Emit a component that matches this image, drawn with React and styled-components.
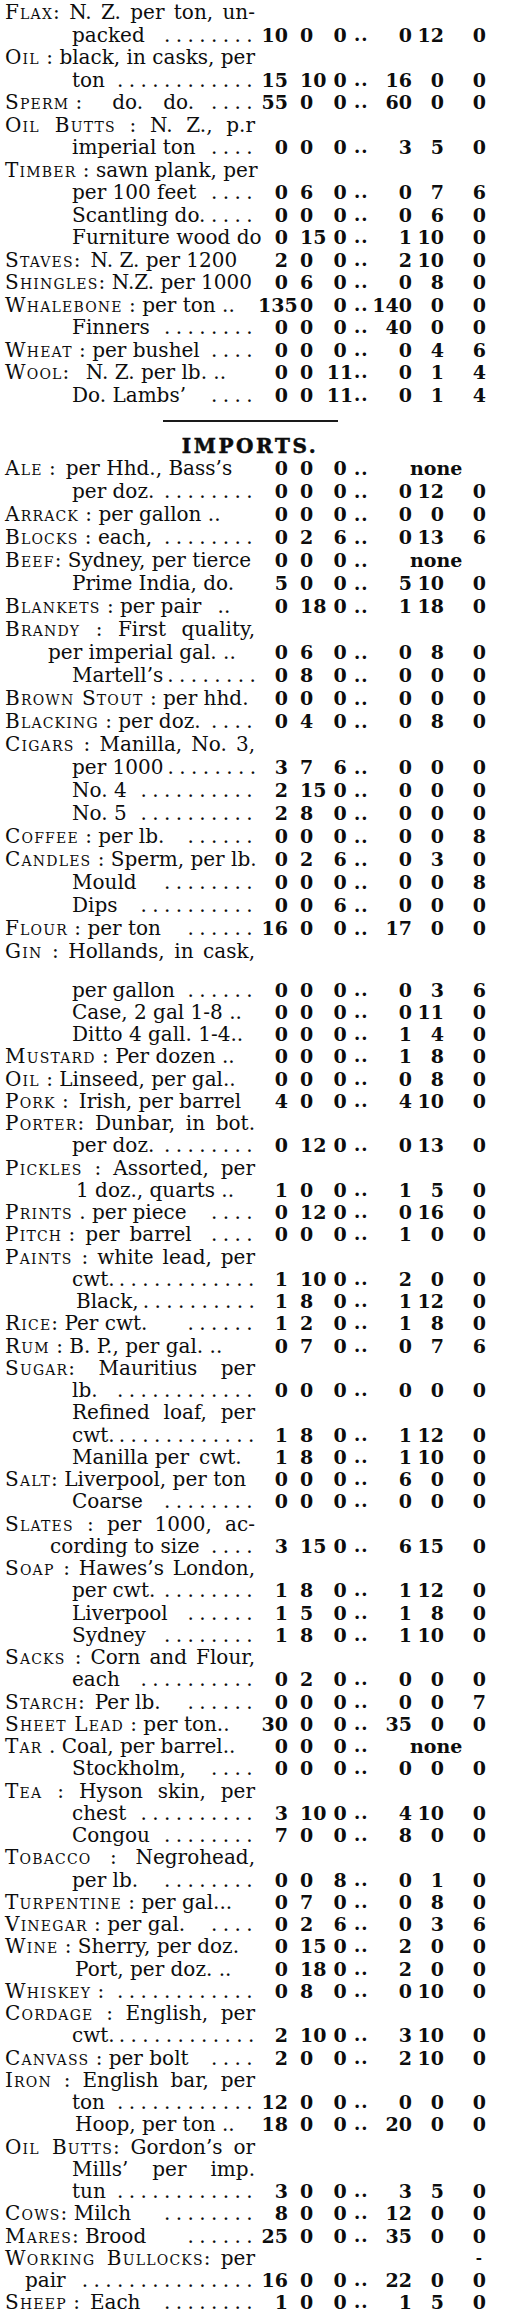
import React from 'react';
import styled, { createGlobalStyle } from 'styled-components';

const Global = createGlobalStyle`
  html, body { margin: 0; padding: 0; background: #ffffff; }
  body {
    font-family: "DejaVu Serif", "Liberation Serif", serif;
    color: #0d0d0d;
  }
`;

const Sheet = styled.div`
  width: 490px;
  padding: 1px 0 0 5px;
  display: flex;
  flex-direction: column;
`;

const Row = styled.div`
  display: grid;
  grid-template-columns: 253px 30px 38px 28px 14px 44px 32px 42px;
  height: ${(p) => p.$h}px;
  line-height: ${(p) => p.$h}px;
  margin-bottom: ${(p) => p.$gap || 0}px;
`;

const Label = styled.div`
  display: flex;
  min-width: 0;
  padding-left: ${(p) => p.$indent || 0}px;
  font-size: 20px;
  white-space: nowrap;
`;

const LabelText = styled.span`
  flex: none;
`;

const HeadText = styled.div`
  padding-left: ${(p) => p.$indent || 0}px;
  padding-right: 3px;
  font-size: 20px;
  white-space: nowrap;
  text-align: justify;
  text-align-last: justify;
`;

const Cat = styled.span`
  font-variant: small-caps;
  letter-spacing: 1.2px;
`;

const Leader = styled.span`
  flex: none;
  margin-left: auto;
  padding-left: 4px;
  letter-spacing: 5.4px;
`;

const Num = styled.span`
  font-size: 19px;
  font-weight: 700;
  text-align: ${(p) => p.$align || 'right'};
  padding-left: ${(p) => p.$pl || 0}px;
`;

const Sep = styled.span`
  font-size: 18px;
  font-weight: 700;
  text-align: center;
  letter-spacing: 1px;
`;

const None = styled.span`
  grid-column: 6 / span 3;
  font-size: 19px;
  font-weight: 700;
  padding-left: 42px;
`;

const Mark = styled.span`
  grid-column: 8;
  font-size: 15px;
  font-weight: 700;
  text-align: right;
  padding-right: 4px;
`;

const Divider = styled.div`
  width: 175px;
  height: 1.5px;
  background: #1a1a1a;
  margin: 14px auto 13px;
`;

const Heading = styled.h2`
  margin: 0;
  height: 22px;
  line-height: 22px;
  text-align: center;
  font-size: 20px;
  font-weight: 900;
  letter-spacing: 2.6px;
  -webkit-text-stroke: 0.5px #0d0d0d;
`;

/* c: category (small caps), t: text, i: indent, d: dot-leader count, n: prices */
const rows = [
  { c: 'Flax', t: ': N. Z. per ton, un-' },
  { i: 67, t: 'packed', d: 8, n: '10 0 0|0 12 0' },
  { c: 'Oil', t: ' : black, in casks, per' },
  { i: 67, t: 'ton', d: 12, n: '15 10 0|16 0 0' },
  { c: 'Sperm', t: ' :\u2003\u2002do.\u2002\u2002do.', d: 4, n: '55 0 0|60 0 0' },
  { c: 'Oil Butts', t: ' : N. Z., p.r' },
  { i: 67, t: 'imperial ton', d: 4, n: '0 0 0|3 5 0' },
  { c: 'Timber', t: ' : sawn plank, per' },
  { i: 67, t: 'per 100 feet', d: 4, n: '0 6 0|0 7 6' },
  { i: 67, t: 'Scantling do.', d: 4, n: '0 0 0|0 6 0' },
  { i: 67, t: 'Furniture wood do', n: '0 15 0|1 10 0' },
  { c: 'Staves', t: ':\u2002N. Z. per 1200', n: '2 0 0|2 10 0' },
  { c: 'Shingles', t: ': N.Z. per 1000', n: '0 6 0|0 8 0' },
  { c: 'Whalebone', t: ' : per ton ..', n: '135 0 0|140 0 0' },
  { i: 67, t: 'Finners', d: 8, n: '0 0 0|40 0 0' },
  { c: 'Wheat', t: ' : per bushel', d: 4, n: '0 0 0|0 4 6' },
  { c: 'Wool', t: ':\u2002 N. Z. per lb. ..', n: '0 0 11|0 1 4' },
  { i: 67, t: 'Do. Lambs\u2019', d: 4, n: '0 0 11|0 1 4' },
  { heading: 'IMPORTS.' },
  { c: 'Ale', t: ' :\u2002per Hhd., Bass\u2019s', n: '0 0 0|none' },
  { i: 67, t: 'per doz.', d: 8, n: '0 0 0|0 12 0' },
  { c: 'Arrack', t: ' : per gallon ..', n: '0 0 0|0 0 0' },
  { c: 'Blocks', t: ' : each,', d: 8, n: '0 2 6|0 13 6' },
  { c: 'Beef', t: ': Sydney, per tierce', n: '0 0 0|none' },
  { i: 67, t: 'Prime India, do.', n: '5 0 0|5 10 0' },
  { c: 'Blankets', t: ' : per pair\u2002 ..', n: '0 18 0|1 18 0' },
  { c: 'Brandy', t: ' : First quality,' },
  { i: 43, t: 'per imperial gal. ..', n: '0 6 0|0 8 0' },
  { i: 67, t: 'Martell\u2019s', d: 8, n: '0 8 0|0 0 0' },
  { c: 'Brown Stout', t: ' : per hhd.', n: '0 0 0|0 0 0' },
  { c: 'Blacking', t: ' : per doz.', d: 4, n: '0 4 0|0 8 0' },
  { c: 'Cigars', t: ' : Manilla, No. 3,' },
  { i: 67, t: 'per 1000', d: 8, n: '3 7 6|0 0 0' },
  { i: 67, t: 'No. 4', d: 10, n: '2 15 0|0 0 0' },
  { i: 67, t: 'No. 5', d: 10, n: '2 8 0|0 0 0' },
  { c: 'Coffee', t: ' : per lb.', d: 6, n: '0 0 0|0 0 8' },
  { c: 'Candles', t: ' : Sperm, per lb.', n: '0 2 6|0 3 0' },
  { i: 67, t: 'Mould', d: 8, n: '0 0 0|0 0 8' },
  { i: 67, t: 'Dips', d: 10, n: '0 0 6|0 0 0' },
  { c: 'Flour', t: ' : per ton', d: 6, n: '16 0 0|17 0 0' },
  { c: 'Gin', t: ' : Hollands, in cask,', gap: 16, endSection: true },
  { i: 67, t: 'per gallon', d: 6, n: '0 0 0|0 3 6' },
  { i: 67, t: 'Case, 2 gal 1-8 ..', n: '0 0 0|0 11 0' },
  { i: 67, t: 'Ditto 4 gall. 1-4..', n: '0 0 0|1 4 0' },
  { c: 'Mustard', t: ' : Per dozen ..', n: '0 0 0|1 8 0' },
  { c: 'Oil', t: ' : Linseed, per gal..', n: '0 0 0|0 8 0' },
  { c: 'Pork', t: ' :\u2002Irish, per barrel', n: '4 0 0|4 10 0' },
  { c: 'Porter', t: ': Dunbar, in bot.' },
  { i: 67, t: 'per doz.', d: 8, n: '0 12 0|0 13 0' },
  { c: 'Pickles', t: ' : Assorted, per' },
  { i: 71, t: '1 doz., quarts ..', n: '1 0 0|1 5 0' },
  { c: 'Prints', t: ' . per piece', d: 4, n: '0 12 0|0 16 0' },
  { c: 'Pitch', t: ' :\u2002per\u2002barrel', d: 4, n: '0 0 0|1 0 0' },
  { c: 'Paints', t: ' : white lead, per' },
  { i: 67, t: 'cwt.', d: 12, n: '1 10 0|2 0 0' },
  { i: 71, t: 'Black,', d: 10, n: '1 8 0|1 12 0' },
  { c: 'Rice', t: ': Per cwt.', d: 6, n: '1 2 0|1 8 0' },
  { c: 'Rum', t: ' : B. P., per gal. ..', n: '0 7 0|0 7 6' },
  { c: 'Sugar', t: ': Mauritius per' },
  { i: 67, t: 'lb.', d: 12, n: '0 0 0|0 0 0' },
  { i: 67, t: 'Refined loaf, per' },
  { i: 67, t: 'cwt.', d: 12, n: '1 8 0|1 12 0' },
  { i: 67, t: 'Manilla per\u2002cwt.', n: '1 8 0|1 10 0' },
  { c: 'Salt', t: ': Liverpool, per ton', n: '0 0 0|6 0 0' },
  { i: 67, t: 'Coarse', d: 8, n: '0 0 0|0 0 0' },
  { c: 'Slates', t: ' : per 1000, ac-' },
  { i: 45, t: 'cording to size', d: 4, n: '3 15 0|6 15 0' },
  { c: 'Soap', t: ' : Hawes\u2019s London,' },
  { i: 67, t: 'per cwt.', d: 8, n: '1 8 0|1 12 0' },
  { i: 67, t: 'Liverpool', d: 6, n: '1 5 0|1 8 0' },
  { i: 67, t: 'Sydney', d: 8, n: '1 8 0|1 10 0' },
  { c: 'Sacks', t: ' : Corn and Flour,' },
  { i: 67, t: 'each', d: 10, n: '0 2 0|0 0 0' },
  { c: 'Starch', t: ':\u2002Per lb.', d: 6, n: '0 0 0|0 0 7' },
  { c: 'Sheet Lead', t: ' : per ton..', n: '30 0 0|35 0 0' },
  { c: 'Tar', t: ' . Coal, per barrel..', n: '0 0 0|none' },
  { i: 67, t: 'Stockholm,', d: 4, n: '0 0 0|0 0 0' },
  { c: 'Tea', t: ' : Hyson skin, per' },
  { i: 67, t: 'chest', d: 10, n: '3 10 0|4 10 0' },
  { i: 67, t: 'Congou', d: 8, n: '7 0 0|8 0 0' },
  { c: 'Tobacco', t: ' : Negrohead,' },
  { i: 67, t: 'per lb.', d: 8, n: '0 0 8|0 1 0' },
  { c: 'Turpentine', t: ' : per gal...', n: '0 7 0|0 8 0' },
  { c: 'Vinegar', t: ' : per gal.', d: 4, n: '0 2 6|0 3 6' },
  { c: 'Wine', t: ' : Sherry, per doz.', n: '0 15 0|2 0 0' },
  { i: 70, t: 'Port, per doz. ..', n: '0 18 0|2 0 0' },
  { c: 'Whiskey', t: ' :', d: 12, n: '0 8 0|0 10 0' },
  { c: 'Cordage', t: ' : English, per' },
  { i: 67, t: 'cwt.', d: 12, n: '2 10 0|3 10 0' },
  { c: 'Canvass', t: ' : per bolt', d: 4, n: '2 0 0|2 10 0' },
  { c: 'Iron', t: ' : English bar, per' },
  { i: 67, t: 'ton', d: 12, n: '12 0 0|0 0 0' },
  { i: 70, t: 'Hoop, per ton ..', n: '18 0 0|20 0 0' },
  { c: 'Oil Butts', t: ': Gordon\u2019s or' },
  { i: 67, t: 'Mills\u2019 per imp.' },
  { i: 67, t: 'tun', d: 12, n: '3 0 0|3 5 0' },
  { c: 'Cows', t: ': Milch', d: 8, n: '8 0 0|12 0 0' },
  { c: 'Mares', t: ': Brood', d: 6, n: '25 0 0|35 0 0' },
  { c: 'Working Bullocks', t: ': per', mark: '-' },
  { i: 20, t: 'pair', d: 15, n: '16 0 0|22 0 0' },
  { c: 'Sheep', t: ' :\u2002Each', d: 8, n: '1 0 0|1 5 0' },
];

/* line pitch of the three stretches of the printed column */
const PITCH = [22.5, 23, 22.25];

const FROM_ALIGN = [
  { $align: 'right' },
  { $align: 'left', $pl: 12 },
  { $align: 'center' },
];

function Line({ r, h }) {
  const text = (
    <>
      {r.c && <Cat>{r.c}</Cat>}
      {r.t}
    </>
  );
  if (!r.n) {
    return (
      <Row $h={h} $gap={r.gap}>
        <HeadText $indent={r.i}>{text}</HeadText>
        {r.mark && <Mark>{r.mark}</Mark>}
      </Row>
    );
  }
  const [from, to] = r.n.split('|');
  return (
    <Row $h={h} $gap={r.gap}>
      <Label $indent={r.i}>
        <LabelText>{text}</LabelText>
        {r.d ? <Leader>{'.'.repeat(r.d)}</Leader> : null}
      </Label>
      {from.split(' ').map((v, k) => (
        <Num key={'a' + k} {...FROM_ALIGN[k]}>
          {v}
        </Num>
      ))}
      <Sep>..</Sep>
      {to === 'none' ? (
        <None>none</None>
      ) : (
        to.split(' ').map((v, k) => <Num key={'b' + k}>{v}</Num>)
      )}
    </Row>
  );
}

export default function App() {
  let section = 0;
  const items = rows.map((r, k) => {
    if (r.heading) {
      section = 1;
      return (
        <React.Fragment key={k}>
          <Divider />
          <Heading>{r.heading}</Heading>
        </React.Fragment>
      );
    }
    const el = <Line key={k} r={r} h={PITCH[section]} />;
    if (r.endSection) section = 2;
    return el;
  });
  return (
    <>
      <Global />
      <Sheet>{items}</Sheet>
    </>
  );
}
